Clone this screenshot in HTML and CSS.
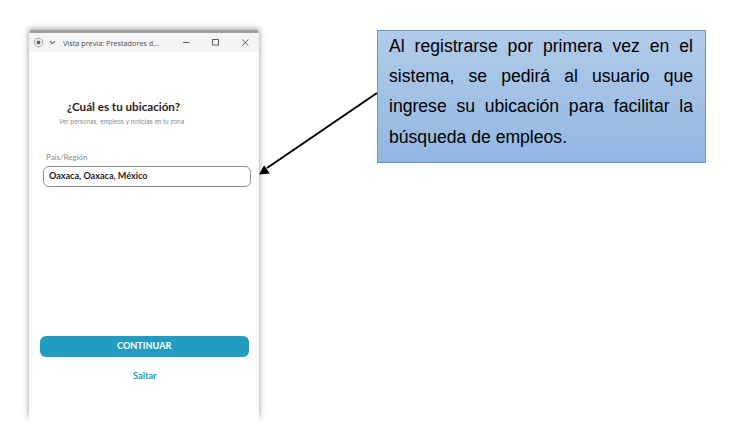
FILE: index.html
```
<!DOCTYPE html>
<html lang="es">
<head>
<meta charset="utf-8">
<title>Vista previa</title>
<link rel="stylesheet" href="styles.css">
</head>
<body>
<main class="canvas">
  <section class="window">
    <header class="titlebar">
      <svg class="icon-record" width="11" height="11" viewBox="0 0 11 11"><circle cx="5.5" cy="5.5" r="4.3" fill="none" stroke="#999" stroke-width=".9"/><circle cx="5.5" cy="5.5" r="2" fill="#666"/></svg>
      <svg class="icon-chevron" width="7" height="5" viewBox="0 0 7 5"><path d="M1 1.2 3.5 3.4 6 1.2" fill="none" stroke="#666" stroke-width="1.1"/></svg>
      <span class="title"><svg class="fit" width="98" height="14"><text x="0" y="9.500" textLength="96" lengthAdjust="spacingAndGlyphs">Vista previa: Prestadores d...</text></svg></span>
      <svg class="controls" width="70" height="10" viewBox="0 0 70 10" fill="none" stroke="#606060"><path d="M1 4.500H7.500"/><rect x="30.5" y="1.5" width="6" height="5.5"/><path d="M60.200 1.500l6.200 6.200M66.400 1.500l-6.200 6.200"/></svg>
    </header>
    <div class="content">
      <h1><svg class="fit" width="116" height="18"><text x="0" y="13" textLength="113" lengthAdjust="spacingAndGlyphs">¿Cuál es tu ubicación?</text></svg></h1>
      <p class="sub"><svg class="fit" width="130" height="10"><text x="0" y="7" textLength="125" lengthAdjust="spacingAndGlyphs">Ver personas, empleos y noticias en tu zona</text></svg></p>
      <div class="label"><svg class="fit" width="50" height="12"><text x="0" y="8" textLength="41.5" lengthAdjust="spacingAndGlyphs">País/Región</text></svg></div>
      <div class="field"><svg class="fit" width="104" height="14"><text x="0" y="9" textLength="98.5" lengthAdjust="spacingAndGlyphs">Oaxaca, Oaxaca, México</text></svg></div>
      <div class="button"><svg class="fit" width="55" height="14"><text x="0" y="9.700" textLength="54.500" lengthAdjust="spacingAndGlyphs">CONTINUAR</text></svg></div>
      <div class="skip"><svg class="fit" width="24" height="14"><text x="0" y="10" textLength="23.5" lengthAdjust="spacingAndGlyphs">Saltar</text></svg></div>
    </div>
  </section>
  <aside class="note">
    <p>Al registrarse por primera vez en el</p>
    <p>sistema, se pedirá al usuario que</p>
    <p>ingrese su ubicación para facilitar la</p>
    <p class="last">búsqueda de empleos.</p>
  </aside>
  <svg class="arrow" width="126" height="90" viewBox="0 0 126 90"><path d="M122 6L12 81" stroke="#000" stroke-width="2"/><path d="M4 87.500L9.200 78.300 14.800 86.600z"/></svg>
</main>
</body>
</html>
```
FILE: styles.css
```
* { box-sizing: border-box; }
body { margin: 0; background: #fff; font-family: Lato, "Liberation Sans", sans-serif; }
.canvas { position: relative; z-index: 0; width: 752px; height: 440px; display: flex; align-items: flex-start; gap: 118px; padding: 30px 0 0 29px; overflow: hidden; }
.window { width: 230px; height: 393px; margin-top: 3px; background: #fff; }
.window::before { content: ""; position: absolute; z-index: -1; left: 30px; top: 30px; width: 228px; height: 386px; background: #a0a0a0; box-shadow: 0 0 6px 1px rgba(0,0,0,.42); }
.fit { display: block; overflow: visible; fill: currentColor; }
.titlebar { height: 19px; display: flex; align-items: center; background: #f4f4f4; padding-left: 4px; }
.icon-chevron { margin-left: 5px; }
.title { width: 98px; margin-left: 7px; color: #505050; font: 7.5px "Open Sans", sans-serif; }
.controls { margin-left: 21px; }
.content { display: flex; flex-direction: column; align-items: flex-start; }
h1 { margin: 46px 0 0 38px; font-size: 12px; font-weight: 700; color: #2b211d; }
.sub { margin: 1px 0 0 30px; font: 5.6px Inter, sans-serif; color: #888; }
.label { margin: 25px 0 0 17px; font-size: 8px; color: #888; }
.field { width: 208px; height: 21px; margin: 2px 0 0 14px; padding: 3px 5px; border: 1px solid #909090; border-radius: 6px; font-size: 8.7px; font-weight: 700; color: #2b211d; }
.button { width: 209px; height: 21px; margin: 149px 0 0 11px; display: flex; justify-content: center; padding-top: 3px; border-radius: 6px; background: #209dc0; color: #fff; font-size: 9px; font-weight: 700; }
.skip { margin: 12px 0 0 104px; color: #209dc0; font-size: 9px; font-weight: 700; }
.note { width: 329px; height: 133px; padding: 0 12px 0 11px; border: 1px solid #5b9bd5; background: linear-gradient(#b1cbe9, #92b7e2); color: #000; font: 17.6px/30.2px "Liberation Sans", sans-serif; }
.note p { margin: 0; text-align: justify; text-align-last: justify; }
.note .last { text-align-last: left; }
.arrow { position: absolute; left: 255px; top: 87px; }
```
